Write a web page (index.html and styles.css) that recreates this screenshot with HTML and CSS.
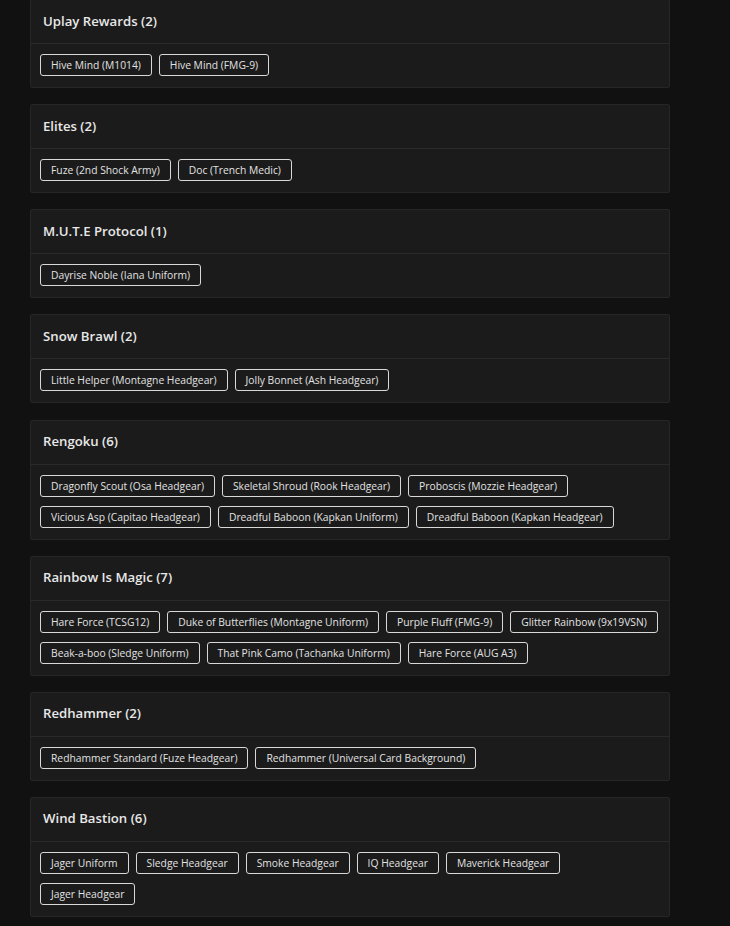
FILE: index.html
```html
<!DOCTYPE html>
<html>
<head>
<meta charset="utf-8">
<link rel="stylesheet" href="styles.css">
</head>
<body>
<div class="page">
  <section class="card">
    <h2 class="card-head">Uplay Rewards (2)</h2>
    <div class="card-body">
      <span class="chip">Hive Mind (M1014)</span>
      <span class="chip">Hive Mind (FMG-9)</span>
    </div>
  </section>
  <section class="card">
    <h2 class="card-head">Elites (2)</h2>
    <div class="card-body">
      <span class="chip">Fuze (2nd Shock Army)</span>
      <span class="chip">Doc (Trench Medic)</span>
    </div>
  </section>
  <section class="card">
    <h2 class="card-head">M.U.T.E Protocol (1)</h2>
    <div class="card-body">
      <span class="chip">Dayrise Noble (Iana Uniform)</span>
    </div>
  </section>
  <section class="card">
    <h2 class="card-head">Snow Brawl (2)</h2>
    <div class="card-body">
      <span class="chip">Little Helper (Montagne Headgear)</span>
      <span class="chip">Jolly Bonnet (Ash Headgear)</span>
    </div>
  </section>
  <section class="card">
    <h2 class="card-head">Rengoku (6)</h2>
    <div class="card-body">
      <span class="chip">Dragonfly Scout (Osa Headgear)</span>
      <span class="chip">Skeletal Shroud (Rook Headgear)</span>
      <span class="chip">Proboscis (Mozzie Headgear)</span>
      <span class="chip">Vicious Asp (Capitao Headgear)</span>
      <span class="chip">Dreadful Baboon (Kapkan Uniform)</span>
      <span class="chip">Dreadful Baboon (Kapkan Headgear)</span>
    </div>
  </section>
  <section class="card">
    <h2 class="card-head">Rainbow Is Magic (7)</h2>
    <div class="card-body">
      <span class="chip">Hare Force (TCSG12)</span>
      <span class="chip">Duke of Butterflies (Montagne Uniform)</span>
      <span class="chip">Purple Fluff (FMG-9)</span>
      <span class="chip">Glitter Rainbow (9x19VSN)</span>
      <span class="chip">Beak-a-boo (Sledge Uniform)</span>
      <span class="chip">That Pink Camo (Tachanka Uniform)</span>
      <span class="chip">Hare Force (AUG A3)</span>
    </div>
  </section>
  <section class="card">
    <h2 class="card-head">Redhammer (2)</h2>
    <div class="card-body">
      <span class="chip">Redhammer Standard (Fuze Headgear)</span>
      <span class="chip">Redhammer (Universal Card Background)</span>
    </div>
  </section>
  <section class="card">
    <h2 class="card-head">Wind Bastion (6)</h2>
    <div class="card-body">
      <span class="chip">Jager Uniform</span>
      <span class="chip">Sledge Headgear</span>
      <span class="chip">Smoke Headgear</span>
      <span class="chip">IQ Headgear</span>
      <span class="chip">Maverick Headgear</span>
      <span class="chip">Jager Headgear</span>
    </div>
  </section>
</div>
</body>
</html>
```

FILE: styles.css
```css
html, body {
  margin: 0;
  padding: 0;
  background: #111111;
}
body {
  font-family: "Open Sans", "Noto Sans", sans-serif;
  color: #e6e6e6;
}
.page {
  width: 640px;
  margin-left: 30px;
  margin-top: -1px;
  display: flex;
  flex-direction: column;
  gap: 16.15px;
}
.card {
  background: #1b1b1b;
  border: 1px solid #262626;
  border-radius: 2px;
}
.card-head {
  margin: 0;
  height: 44px;
  box-sizing: border-box;
  padding: 0 12px 2px;
  display: flex;
  align-items: center;
  font-size: 13.2px;
  font-weight: 600;
  color: #e8e8e8;
  border-bottom: 1px solid #2a2a2a;
}
.card-body {
  display: flex;
  flex-wrap: wrap;
  gap: 9px 7px;
  padding: 10px 9px 11px;
}
.chip {
  height: 22px;
  box-sizing: border-box;
  display: inline-flex;
  align-items: center;
  padding: 0 10px;
  border: 1px solid #d8d8d8;
  border-radius: 3px;
  font-size: 10.3px;
  color: #e2e2e2;
  white-space: nowrap;
}
```
